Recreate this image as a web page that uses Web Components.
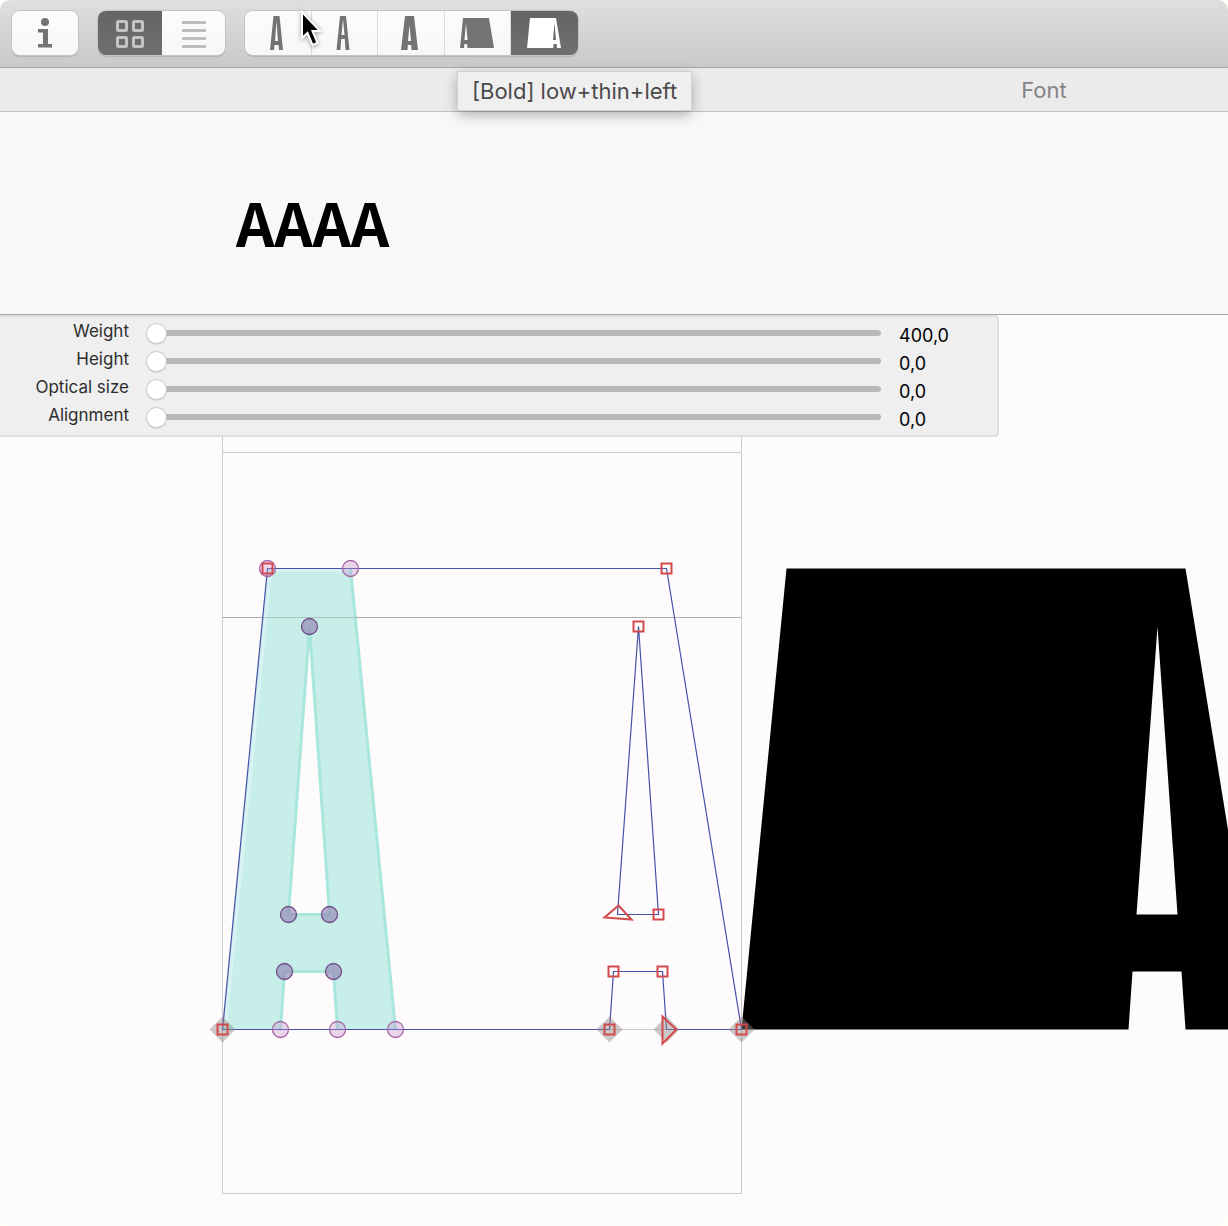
<!DOCTYPE html>
<html lang="en">
<head>
<meta charset="utf-8">
<title>Font editor</title>
<style>
    html, body{
        margin: 0;
        min-height: 100%;
        background: #fffffa;
        font-family: Inter, "Liberation Sans", sans-serif;
    }
</style>
</head>
<body>
<font-window>
    <tool-bar slot="toolbar"></tool-bar>
    <tab-strip slot="tabs" tip="[Bold] low+thin+left">Font</tab-strip>
    <preview-line slot="preview" text="AAAA"></preview-line>
    <axis-panel slot="axes">
        <axis-slider name="Weight" value="400,0"></axis-slider>
        <axis-slider name="Height" value="0,0"></axis-slider>
        <axis-slider name="Optical size" value="0,0"></axis-slider>
        <axis-slider name="Alignment" value="0,0"></axis-slider>
    </axis-panel>
    <glyph-canvas slot="canvas"></glyph-canvas>
</font-window>

<script>
class BaseElement extends HTMLElement{
    constructor(){
        super();
        this.attachShadow({mode: "open"});
    }
    connectedCallback(){
        this.render();
    }
    render(){
        const template = document.createElement("template");
        template.innerHTML = this.getStyles() + this.getTemplate();
        this.shadowRoot.replaceChildren(template.content.cloneNode(true));
    }
}

class FontWindow extends BaseElement{
    getTemplate(){
        return `
            <header>
                <slot name="toolbar"></slot>
                <slot name="tabs"></slot>
            </header>
            <slot name="preview"></slot>
            <main>
                <slot name="canvas"></slot>
                <slot name="axes"></slot>
            </main>
        `;
    }
    getStyles(){
        return `
            <style>
                :host{
                    display: flex;
                    flex-direction: column;
                    min-height: 100vh;
                    border-radius: 10px;
                    overflow: hidden;
                    background: #fdfbfc;
                }
                header{
                    position: relative;
                    z-index: 1;
                }
                main{
                    flex: 1;
                    display: grid;
                    grid-template: 1fr / 1fr;
                }
                ::slotted([slot="canvas"]), ::slotted([slot="axes"]){
                    grid-area: 1 / 1;
                }
            </style>
        `;
    }
}

class SegmentButton extends BaseElement{
    getTemplate(){
        const on = this.hasAttribute("on");
        return `
            <button type="button" aria-label="${this.getAttribute("label")}" aria-pressed="${on}">
                <slot></slot>
            </button>
        `;
    }
    getStyles(){
        return `
            <style>
                :host{
                    display: block;
                    flex: 1;
                    color: #747274;
                }
                :host([on]){
                    color: #fff;
                }
                :host(:not(:last-child):not([on])) button{
                    border-right: 1px solid #dcdcdc;
                }
                button{
                    display: grid;
                    place-items: center;
                    box-sizing: border-box;
                    width: 100%;
                    height: 44px;
                    margin: 0;
                    padding: var(--segment-padding, 0);
                    border: 0;
                    color: inherit;
                    background: linear-gradient(#fcfcfc, #f7f7f8);
                }
                :host([on]) button{
                    background: linear-gradient(#666466, #706e70);
                }
            </style>
        `;
    }
}

class SegmentGroup extends BaseElement{
    getTemplate(){
        return `<slot></slot>`;
    }
    getStyles(){
        return `
            <style>
                :host{
                    display: flex;
                    border-radius: 8px;
                    overflow: hidden;
                    box-shadow: 0 0 0 1px #c4c4c4, 0 2px 1px #b4b4b4;
                }
            </style>
        `;
    }
}

class ToolBar extends BaseElement{
    getTemplate(){
        return `
            <segment-group class="one">
                <segment-button label="Info">
                    <svg width="16" height="30"><circle cx="8" cy="4" r="4" fill="currentColor"/><path d="M1 11h10v15h4v3.500H1V26h5V14.500H1z" fill="currentColor"/></svg>
                </segment-button>
            </segment-group>
            <segment-group class="two">
                <segment-button label="Grid" on>
                    <svg width="30" height="30" fill="none" stroke="#c4c3c4" stroke-width="3">
                        <rect x="2.5" y="2.5" width="9" height="9" rx="1"/><rect x="18.5" y="2.5" width="9" height="9" rx="1"/>
                        <rect x="2.5" y="18.5" width="9" height="9" rx="1"/><rect x="18.5" y="18.5" width="9" height="9" rx="1"/>
                    </svg>
                </segment-button>
                <segment-button label="List">
                    <svg width="26" height="28" stroke="#bebdbe" stroke-width="3"><path d="M1 2.5h24M1 10.5h24M1 18.5h24M1 26.5h24"/></svg>
                </segment-button>
            </segment-group>
            <segment-group class="masters">
                <segment-button label="Light">
                    <svg width="34" height="34" fill="currentColor"><path fill-rule="evenodd" d="M13.500 0h6l3.500 34h-4l-.5-5h-4l-.5 5h-4zM16.500 5L15 25h3z"/></svg>
                </segment-button>
                <segment-button label="Light high">
                    <svg width="34" height="34" fill="currentColor"><path fill-rule="evenodd" d="M14 0h6l3.500 34h-4l-.7-11h-3.600l-.7 11h-4zM17 3l-1.500 16h3z"/></svg>
                </segment-button>
                <segment-button label="Bold">
                    <svg width="34" height="34" fill="currentColor"><path fill-rule="evenodd" d="M12 0h9l4 34h-6.500l-.3-5h-3.400l-.3 5H8zM16.500 9L15 25h3z"/></svg>
                </segment-button>
                <segment-button label="Wide right">
                    <svg width="34" height="30" fill="currentColor"><path fill-rule="evenodd" d="M3 0h26l5 30H7.500l-.4-4H4.400L4 30H0zM6 5L4.500 22h3z"/></svg>
                </segment-button>
                <segment-button label="Wide left" on>
                    <svg width="34" height="30" fill="currentColor"><path fill-rule="evenodd" d="M3 0h26l5 30h-4l-.4-4h-3l-.4 4H0zM27.500 5L26 22h3z"/></svg>
                </segment-button>
            </segment-group>
            <svg class="cursor" width="26" height="40" viewBox="0 0 26 40">
                <path d="M4 2v26l5.500-5 5 12 5-2-5-12h7.500z" fill="#000" stroke="#fff" stroke-width="2"/>
            </svg>
        `;
    }
    getStyles(){
        return `
            <style>
                :host{
                    position: relative;
                    display: flex;
                    align-items: center;
                    gap: 20px;
                    box-sizing: border-box;
                    height: 68px;
                    padding: 0 12px 2px;
                    border-bottom: 1px solid #a9a8a9;
                    background: linear-gradient(#dfdfdf, #c9c9c9);
                }
                .one{ width: 66px; }
                .two{ width: 127px; --segment-padding: 2px 0 0 1px; }
                .masters{ width: 333px; --segment-padding: 0 2px 0 0; }
                .cursor{
                    position: absolute;
                    left: 298px;
                    top: 10px;
                    filter: drop-shadow(0 1px 2px #0006);
                }
            </style>
        `;
    }
}

class TabStrip extends BaseElement{
    getTemplate(){
        return `
            <span class="tab"><slot></slot></span>
            <div class="tip" role="tooltip">${this.getAttribute("tip")}</div>
        `;
    }
    getStyles(){
        return `
            <style>
                :host{
                    position: relative;
                    display: flex;
                    justify-content: flex-end;
                    height: 43px;
                    border-bottom: 1px solid #c0bfc0;
                    background: #ebebeb;
                    font-size: 22px;
                    line-height: 45px;
                    color: #858485;
                }
                .tab{
                    width: 368px;
                    text-align: center;
                }
                .tip{
                    position: absolute;
                    left: 458px;
                    top: 4px;
                    padding: 0 14px;
                    line-height: 38px;
                    color: #4b4a4b;
                    background: #efefef;
                    box-shadow: 0 0 0 1px #d2d2d2, 0 4px 14px #0005;
                }
            </style>
        `;
    }
}

class PreviewLine extends BaseElement{
    getTemplate(){
        return `<input type="text" aria-label="Preview" value="${this.getAttribute("text")}">`;
    }
    getStyles(){
        return `
            <style>
                :host{
                    display: flex;
                    height: 202px;
                    padding-left: 236px;
                    border-bottom: 1px solid #a8a6a9;
                    background: #f8f7fa;
                }
                input{
                    flex: 1;
                    min-width: 0;
                    padding: 14px 0 0;
                    border: 0;
                    outline: 0;
                    background: none;
                    color: #000;
                    font: bold 60px "Noto Sans CJK JP", "Liberation Sans", sans-serif;
                }
            </style>
        `;
    }
}

class AxisPanel extends BaseElement{
    getTemplate(){
        return `<slot></slot>`;
    }
    getStyles(){
        return `
            <style>
                :host{
                    display: flex;
                    flex-direction: column;
                    align-self: start;
                    z-index: 1;
                    box-sizing: border-box;
                    max-width: 999px;
                    padding: 2px 0 4px;
                    border: 2px solid #e0dee0;
                    border-left: 0;
                    border-radius: 0 4px 4px 0;
                    background: #efeff0;
                }
            </style>
        `;
    }
}

class AxisSlider extends BaseElement{
    getTemplate(){
        const value = this.getAttribute("value");
        return `
            <label for="axis">${this.getAttribute("name")}</label>
            <input id="axis" type="range" min="0" max="1000" value="0">
            <output for="axis">${value}</output>
        `;
    }
    getStyles(){
        return `
            <style>
                :host{
                    display: grid;
                    grid-template: 28px / 129px 1fr 98px;
                    column-gap: 18px;
                }
                label{
                    font-size: 17px;
                    line-height: 24px;
                    text-align: right;
                    color: #2e2d2e;
                }
                output{
                    font-size: 18px;
                    line-height: 34px;
                    color: #000;
                }
                input{
                    appearance: none;
                    width: 100%;
                    height: 28px;
                    margin: 0;
                    background: none;
                }
                input::-webkit-slider-runnable-track{
                    height: 6px;
                    border-radius: 3px;
                    background: #b9b8b9;
                }
                input::-webkit-slider-thumb{
                    appearance: none;
                    width: 19px;
                    height: 19px;
                    margin-top: -6px;
                    border-radius: 50%;
                    background: #fff;
                    box-shadow: 0 0 0 1px #cfcecf, 0 1px 2px #0005;
                }
            </style>
        `;
    }
}

// glyph units, y goes down from the baseline
const master = {
    outline: [[0,0],[45,-461],[444,-461],[519,0],[444,0],[440,-58],[391,-58],[387,0]],
    counter: [[416,-403],[395,-115],[436,-115]]
};
const ghost = {
    outline: [[0,0],[45,-461],[128,-461],[173,0],[115,0],[111,-58],[62,-58],[58,0]],
    counter: [[87,-403],[66,-115],[107,-115]]
};

class GlyphCanvas extends BaseElement{
    path(shape){
        return Object.values(shape).map(points => "M" + points.join("L") + "z").join("");
    }
    square([x, y]){
        return `<rect x="${x - 5}" y="${y - 5}" width="10" height="10" class="node"/>`;
    }
    dot([x, y], type){
        return `<circle cx="${x}" cy="${y}" r="8" class="${type}"/>`;
    }
    diamond(x){
        return `<path d="M${x} -13l13 13l-13 13l-13 -13z" fill="#8f8886" fill-opacity=".45"/>`;
    }
    getTemplate(){
        const squares = [[0,0],[45,-461],[444,-461],[519,0],[440,-58],[391,-58],[387,0],[416,-403],[436,-115]];
        const light = [[45,-461],[128,-461],[173,0],[115,0],[58,0]];
        const dark = [[87,-403],[66,-115],[107,-115],[62,-58],[111,-58]];
        return `
            <svg width="100%" height="100%" role="img" aria-label="Glyph A">
                <g transform="translate(222.5 714.5)">
                    <path class="metrics" d="M0 -715V164H519V-715M0 -577H519M0 -412H519M0 0H519"/>
                    <path transform="translate(519)" d="${this.path(master)}" fill-rule="evenodd"/>
                    <path d="${this.path(ghost)}" fill-rule="evenodd" fill="#c7eee8"/>
                    <path d="M128 -461L173 0M115 0L111 -58H62L58 0M87 -403L66 -115H107z" class="ghost"/>
                    <path d="M3 -2L48 -459H127" fill="none" stroke="#d9f2f3" stroke-width="3"/>
                    <path d="M0 -412H519" stroke="#8a8586" stroke-opacity=".4"/>
                    <path class="master" d="M387 0L391 -58H440L444 0H519L444 -461H45L0 0H387M416 -403L395 -115H436z"/>
                    ${[0, 387, 444, 519].map(x => this.diamond(x)).join("")}
                    ${light.map(p => this.dot(p, "light")).join("")}
                    ${dark.map(p => this.dot(p, "dark")).join("")}
                    ${squares.map(p => this.square(p)).join("")}
                    <path class="node" d="M396 -124L382 -112L409 -110zM440 -13V14L454 0z"/>
                </g>
            </svg>
        `;
    }
    getStyles(){
        return `
            <style>
                :host{
                    display: block;
                    min-height: 880px;
                    min-width: 0;
                    overflow: hidden;
                }
                svg{
                    display: block;
                    min-height: 880px;
                }
                .metrics{ fill: none; stroke: #cdcacb; }
                .ghost{ fill: none; stroke: #a9e6dc; stroke-width: 3; }
                .master{ fill: none; stroke: #4652a8; stroke-width: 1.2; }
                .node{ fill: none; stroke: #d24a4c; stroke-width: 2; }
                .light{ fill: #c78fca; fill-opacity: .35; stroke: #a565a5; stroke-width: 1.300; }
                .dark{ fill: #9484b4; fill-opacity: .65; stroke: #704b88; stroke-width: 1.300; }
            </style>
        `;
    }
}

customElements.define("font-window", FontWindow);
customElements.define("segment-button", SegmentButton);
customElements.define("segment-group", SegmentGroup);
customElements.define("tool-bar", ToolBar);
customElements.define("tab-strip", TabStrip);
customElements.define("preview-line", PreviewLine);
customElements.define("axis-panel", AxisPanel);
customElements.define("axis-slider", AxisSlider);
customElements.define("glyph-canvas", GlyphCanvas);
</script>
</body>
</html>
